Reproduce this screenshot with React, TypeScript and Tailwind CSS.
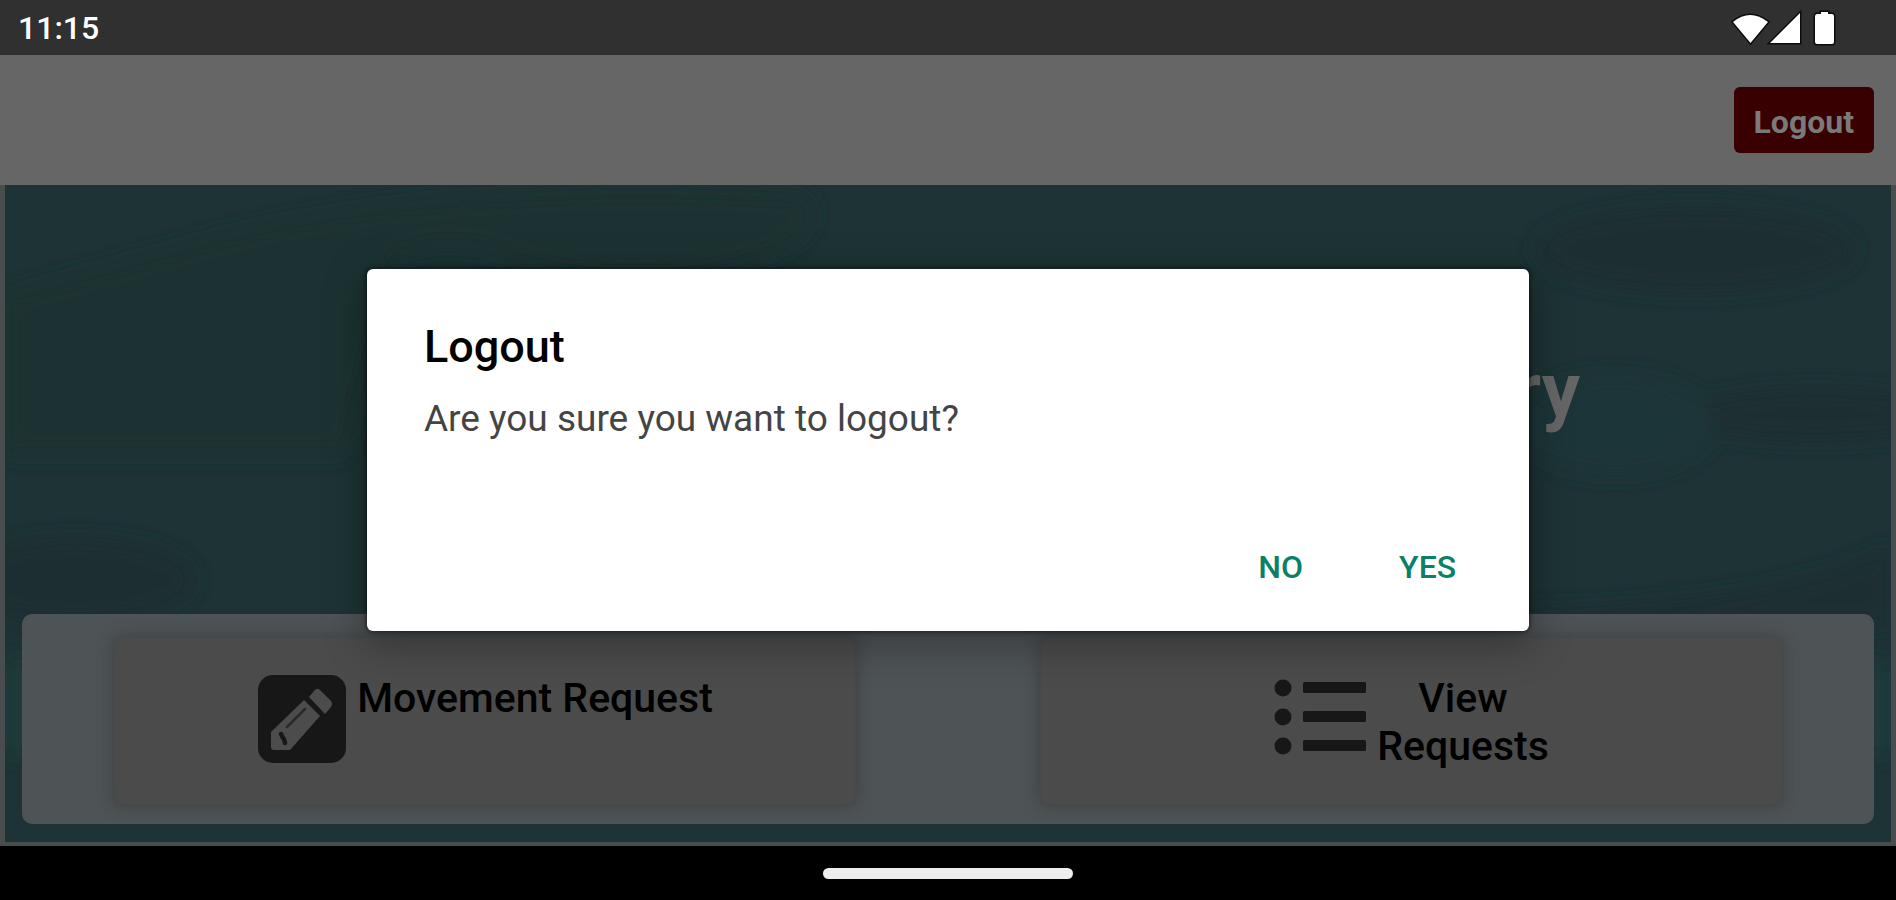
function StatusIcons() {
  return (
    <svg viewBox="0 0 108 38" className="h-[38px] w-[108px]" fill="#ffffff" stroke="#0c0c0c" strokeWidth="3" paintOrder="stroke" aria-hidden="true">
      <path d="M2 13 Q19 -1 37 13 L19.500 34 Z" />
      <path d="M69 4 V34 H39 Z" />
      <path d="M86 5 H90 V3 H97 V5 H101 Q103 5 103 8 V33 Q103 35 101 35 H86 Q84 35 84 33 V8 Q84 5 86 5 Z" />
    </svg>
  );
}

function EditIcon() {
  return (
    <svg viewBox="0 0 90 90" className="size-[90px] shrink-0" aria-hidden="true">
      <rect x="1" y="1" width="88" height="88" rx="15" fill="#171717" />
      <g fill="#4c4c4c">
        <path d="M14 58 L47 26 L63 42 L33 76 H17 Q14 76 14 73 Z" />
        <path d="M52 23 L57 17 Q60 13 63 16 L74 27 Q76 30 74 33 L68 40 Z" />
      </g>
      <path d="M30 53 L48 35" stroke="#2a2a2a" strokeWidth="2.500" strokeLinecap="round" />
      <path d="M24 60 L26 64 M27 65 L28 69" stroke="#171717" strokeWidth="4.500" strokeLinecap="round" fill="none" />
    </svg>
  );
}

function ListIcon() {
  return (
    <svg viewBox="0 0 94 90" className="h-[90px] w-[94px] shrink-0" fill="#171717" aria-hidden="true">
      {[14, 43, 72].map((y) => (
        <g key={y}>
          <circle cx="10" cy={y} r="8.500" />
          <rect x="30" y={y - 6} width="63" height="11" rx="1.500" />
        </g>
      ))}
    </svg>
  );
}

function Waves() {
  return (
    <svg className="absolute inset-0 h-full w-full" viewBox="0 0 1886 657" preserveAspectRatio="none" aria-hidden="true">
      <defs>
        <filter id="soft" x="-20%" y="-20%" width="140%" height="140%">
          <feGaussianBlur stdDeviation="10" />
        </filter>
      </defs>
      <rect width="1886" height="657" fill="#1d3335" />
      <g filter="url(#soft)">
        <path d="M180 60 Q420 -10 800 10 Q840 60 690 90 Q560 100 500 70 Q430 50 390 75 L340 270 H0 V110 Z" fill="#1c3033" />
        <ellipse cx="1690" cy="65" rx="160" ry="42" fill="#1c2f32" />
        <ellipse cx="1810" cy="230" rx="130" ry="26" fill="#1c2e31" />
        <ellipse cx="1610" cy="240" rx="100" ry="50" fill="#1f3638" />
        <ellipse cx="70" cy="395" rx="120" ry="42" fill="#1c2e31" />
        <path d="M1886 360 Q1790 420 1500 425 V440 H1886 Z" fill="#1c2f32" />
        <path d="M0 475 H60 V570 H0 Z M1850 480 H1886 V570 H1850 Z" fill="#1d3a3b" />
      </g>
    </svg>
  );
}

const cardClass =
  "flex h-[166px] w-4/5 items-start justify-center gap-[10px] rounded-lg bg-[#4b4b4b] pt-9 text-[41px] leading-[48px] font-medium text-black shadow-[0_0_14px_3px_rgba(50,54,56,0.5)]";

export default function App() {
  return (
    <div className="relative flex min-h-screen flex-col bg-black font-[Roboto,sans-serif]">
      <div className="flex h-[55px] items-center justify-between bg-[#303030] pr-[57px] pl-[18px]">
        <time className="text-[32px] leading-9 font-medium text-white">11:15</time>
        <StatusIcons />
      </div>

      <header className="flex h-[130px] items-center justify-end bg-[#666666] pr-[22px]">
        <button type="button" className="h-[66px] rounded-md bg-[#380000] px-5 pt-1 text-[32px] leading-10 font-bold text-[#7a7a7a]">
          Logout
        </button>
      </header>

      <main className="relative flex flex-1 flex-col border-x-[5px] border-b-4 border-[#4a4d4e]">
        <Waves />
        <div className="relative flex flex-1 items-center justify-end pr-[311px] pb-5">
          <h1 className="text-[76px] leading-none font-bold text-[#666666]">ry</h1>
        </div>
        <div className="relative mx-[17px] mb-[18px] grid h-[210px] grid-cols-2 place-items-center rounded-[10px] bg-[#4e5355] pt-1">
          <button type="button" className={cardClass}>
            <EditIcon />
            <span>Movement Request</span>
          </button>
          <button type="button" className={cardClass}>
            <ListIcon />
            <span className="w-min text-center">View Requests</span>
          </button>
        </div>
      </main>

      <footer className="flex h-[54px] items-center justify-center">
        <div className="h-[11px] w-[250px] rounded-full bg-[#eeeeee]" />
      </footer>

      <div className="absolute inset-0 flex items-center justify-center">
        <section
          role="dialog"
          aria-modal="true"
          aria-labelledby="dialog-title"
          className="flex h-[362px] w-[61.3%] flex-col rounded-md bg-white px-[57px] pt-12 pb-[38px] shadow-[0_10px_40px_4px_rgba(0,0,0,0.3),0_0_4px_1px_rgba(0,0,0,0.5)]"
        >
          <h2 id="dialog-title" className="text-[45px] leading-[60px] font-medium text-black">
            Logout
          </h2>
          <p className="mt-[18px] text-[37px] leading-[48px] text-[#444444]">Are you sure you want to logout?</p>
          <div className="mt-auto flex justify-end gap-16 text-[32px] leading-[52px] font-medium text-[#0b8068]">
            <button type="button" className="px-4">NO</button>
            <button type="button" className="px-4">YES</button>
          </div>
        </section>
      </div>
    </div>
  );
}
